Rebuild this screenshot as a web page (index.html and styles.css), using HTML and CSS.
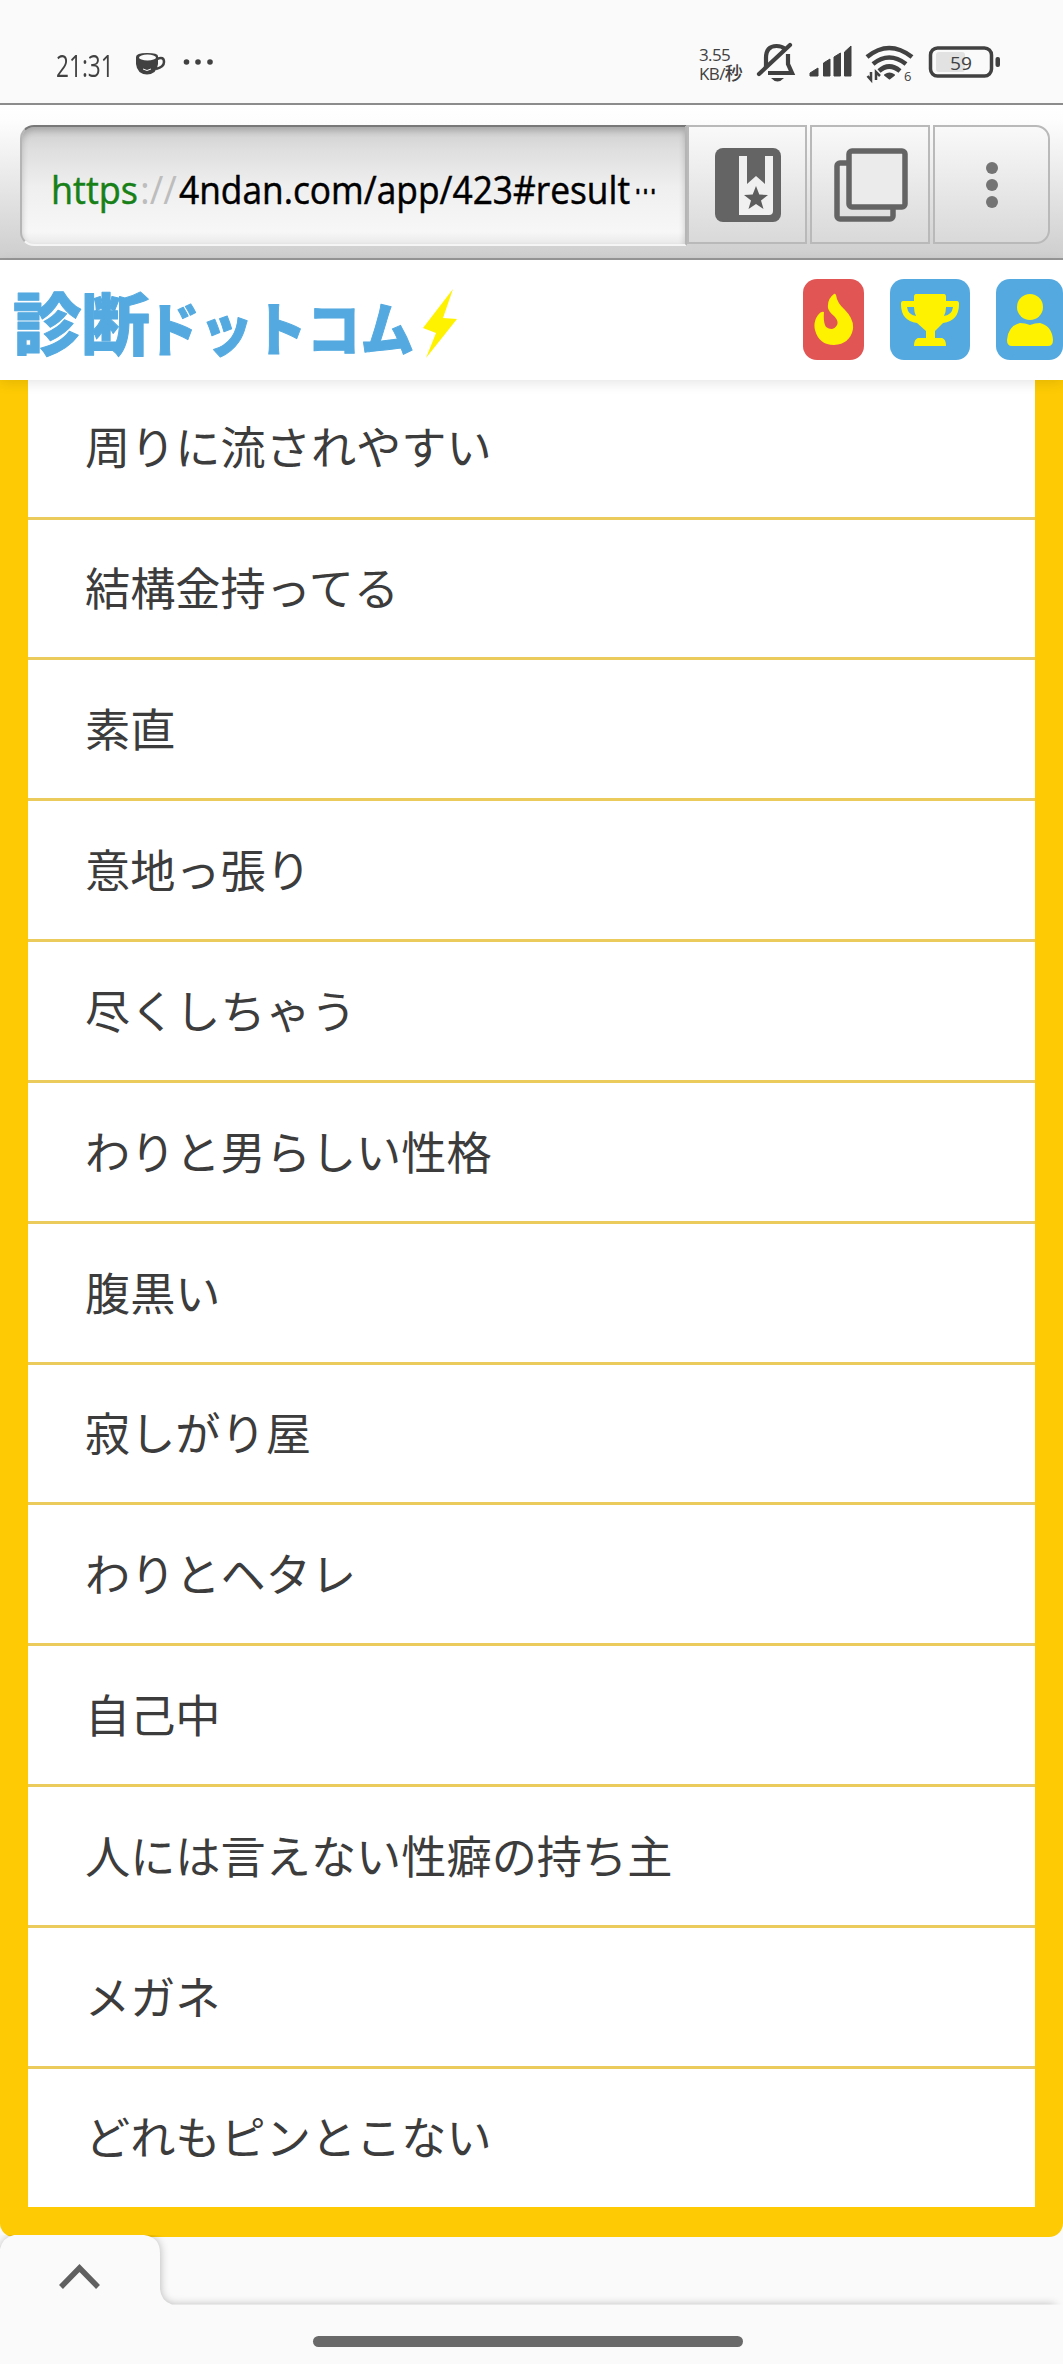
FILE: index.html
```
<!DOCTYPE html>
<html lang="ja">
<head>
<meta charset="utf-8">
<title>診断ドットコム</title>
<link rel="stylesheet" href="styles.css">
</head>
<body>
<div class="screen">
  <div class="status">
    <span class="clock"><span class="stretch">21:31</span></span>
    <svg class="cup" width="30" height="24" viewBox="0 0 30 24">
      <path d="M0 5Q0 1 11 1T22 4V12Q21 22 11 22.500Q1 22 0 12Z" fill="#414141"/>
      <ellipse cx="11.500" cy="5.500" rx="8.500" ry="3" fill="#fafafa"/>
      <path d="M21 7Q28 4 28 10Q28 15 20 17" fill="none" stroke="#414141" stroke-width="2.500"/>
      <path d="M7 17Q11 20 15 17" fill="none" stroke="#fafafa" stroke-width="1"/>
    </svg>
    <svg class="more" width="30" height="8" viewBox="0 0 30 8" fill="#414141"><circle cx="3.500" cy="4" r="2.800"/><circle cx="15" cy="4" r="2.800"/><circle cx="27" cy="4" r="2.800"/></svg>
    <span class="speed">3.55<br>KB/<b>秒</b></span>
    <svg class="signals" width="252" height="44" viewBox="0 0 252 44" fill="none" stroke="#414141">
      <g stroke-width="4.200">
        <path d="M10 25V16Q10 4 20.500 4Q26 4 29 7M32 12V22L36 31H12"/>
        <path d="M3 32L34 3" stroke-linecap="round"/>
      </g>
      <path d="M15 36H28Q21.500 43 15 36Z" fill="#414141" stroke="none"/>
      <path d="M54 34V31L62 26V34ZM67.500 34V21L74 17V34ZM78 34V15L84.500 11V34ZM88.500 34V10L95 4V34Z" fill="#414141" stroke-width="1" stroke-linejoin="round"/>
      <g stroke-width="4.600">
        <path d="M111 15Q133 -3 156 15"/><path d="M117 22Q133 9 150 22"/><path d="M123 29Q133 20 144 29"/>
      </g>
      <path d="M129 33Q133.500 30 138 33L133.500 36.500Z" fill="#414141" stroke-width="2" stroke-linejoin="round"/>
      <path d="M115 30V38L111.500 34M120 38V30L124 34" stroke-width="2.500"/>
      <rect x="174.500" y="6" width="61" height="28" rx="7" stroke-width="3.500"/>
      <rect x="180" y="10" width="29" height="20" rx="3" fill="#e2e2e2" stroke="none"/>
      <rect x="239.500" y="15" width="4.500" height="10" rx="2" fill="#414141" stroke="none"/>
      <text class="net-mark" x="148" y="39">6</text>
      <text class="battery-value" x="194" y="28" textLength="22" lengthAdjust="spacingAndGlyphs">59</text>
    </svg>
  </div>

  <div class="toolbar">
    <div class="address">
      <svg class="url" width="620" height="60" viewBox="0 0 620 60">
        <text y="46" class="scheme" x="-2" textLength="87" lengthAdjust="spacingAndGlyphs">https</text>
        <text y="46" class="slashes" x="87" textLength="37" lengthAdjust="spacingAndGlyphs">://</text>
        <text y="46" class="path" x="126" textLength="451" lengthAdjust="spacingAndGlyphs">4ndan.com/app/423#result</text>
        <text y="46" class="path" x="581" textLength="23" lengthAdjust="spacingAndGlyphs">⋯</text>
      </svg>
    </div>
    <div class="tool">
      <svg width="66" height="74" viewBox="0 0 66 74">
        <rect x="0" y="0" width="66" height="74" rx="8" fill="#646464"/>
        <path d="M24 8H32V36L41 28L50 36V8H58V63Q58 67 54 67H24Z" fill="#f0f0f0"/>
        <path d="M41 38L44.300 46.500L53 47L46 52.500L48.500 61L41 56L33.500 61L36 52.500L29 47L37.700 46.500Z" fill="#5c5c5c"/>
      </svg>
    </div>
    <div class="tool">
      <svg width="74" height="74" viewBox="0 0 74 74" fill="none" stroke="#646464" stroke-width="5.500">
        <rect x="3" y="15" width="56" height="56" rx="3"/>
        <rect x="15" y="3" width="56" height="56" rx="3" fill="#ebebeb"/>
      </svg>
    </div>
    <div class="tool tool-last">
      <svg width="12" height="46" viewBox="0 0 12 46" fill="#747474"><circle cx="6" cy="6" r="6"/><circle cx="6" cy="23" r="6"/><circle cx="6" cy="40" r="6"/></svg>
    </div>
  </div>

  <header class="site">
    <svg class="logo" width="470" height="80" viewBox="0 0 470 80">
      <g class="logo-text">
        <text x="13" y="61" class="big" textLength="137" lengthAdjust="spacingAndGlyphs">診断</text>
        <text x="146" y="62" class="small" textLength="268" lengthAdjust="spacingAndGlyphs">ドットコム</text>
      </g>
      <path d="M453 0L423 39L436 44L426 69L457 30L443 29Z" fill="#fff200"/>
    </svg>
    <nav class="links">
      <a class="link hot"><svg width="40" height="53" viewBox="0 0 40 53"><path d="M20 1Q13 6 14 15Q15 19 20 23Q25 28 23 32Q19 39 12 34Q9 29 10 19Q7 18 4 22Q-1 29 1 37Q5 52 20 52Q36 51 39 36Q40 26 31 17Q23 10 22 2Q21 0 20 1Z"/></svg></a>
      <a class="link cup-link"><svg width="58" height="52" viewBox="0 0 58 52"><path fill-rule="evenodd" d="M15 0H43Q45 0 45 3V7H56Q58 7 58 10Q58 27 42 29L34 37V44H41Q45 45 45 52H13Q13 45 17 44H25V37L16 29Q0 27 0 10Q0 7 2 7H13V3Q13 0 15 0ZM6 13Q7 21 15 22Q13 18 13 13ZM45 13Q45 18 43 22Q51 21 52 13Z"/></svg></a>
      <a class="link user"><svg width="46" height="52" viewBox="0 0 46 52"><circle cx="23" cy="13" r="13"/><path d="M13 29Q18 29 23 31Q28 29 33 29Q45 32 46 46Q46 52 41 52H5Q0 52 0 46Q1 32 13 29Z"/></svg></a>
    </nav>
  </header>

  <main class="page">
    <ul class="choices">
      <li>周りに流されやすい</li>
      <li>結構金持ってる</li>
      <li>素直</li>
      <li>意地っ張り</li>
      <li>尽くしちゃう</li>
      <li>わりと男らしい性格</li>
      <li>腹黒い</li>
      <li>寂しがり屋</li>
      <li>わりとヘタレ</li>
      <li>自己中</li>
      <li>人には言えない性癖の持ち主</li>
      <li>メガネ</li>
      <li>どれもピンとこない</li>
    </ul>
  </main>

  <footer class="bottom">
    <svg class="drawer" width="1063" height="128" viewBox="0 0 1063 128">
      <defs><filter id="soft" x="-5%" y="-20%" width="110%" height="140%"><feGaussianBlur stdDeviation="5"/></filter></defs>
      <path d="M0 18Q2 4 14 1H146Q160 3 160 18V56Q160 66 172 70H1055V128H0Z" fill="#000" opacity=".28" filter="url(#soft)"/>
      <path d="M0 14Q3 2 14 0H144Q160 2 160 18V54Q161 66 172 69.500H1063V128H0Z" fill="#fafafa"/>
      <path d="M61 52L79.500 33L98 52" fill="none" stroke="#606060" stroke-width="5.500"/>
    </svg>
    <div class="home"></div>
  </footer>
</div>
</body>
</html>
```
FILE: styles.css
```
* { box-sizing: border-box; }
body { margin: 0; background: #fafafa; }
.screen {
  width: 1063px; height: 2364px; overflow: hidden;
  display: flex; flex-direction: column;
  font-family: "Noto Sans CJK JP", sans-serif; color: #3c3c3c;
}
.screen svg { display: block; flex: none; }

.status { height: 103px; flex: none; display: flex; align-items: flex-start; padding-left: 56px; color: #414141; }
.clock { width: 57px; margin-top: 47px; height: 36px; font: 31px/36px "Open Sans", sans-serif; }
.stretch { display: block; transform: scaleX(.73); transform-origin: left; }
.cup { margin: 52px 0 0 23px; }
.more { margin: 58px 0 0 17px; }
.speed { width: 58px; margin: 45px 0 0 486px; font: 17px/19px "Open Sans", "Noto Sans CJK JP", sans-serif; letter-spacing: -.6px; white-space: nowrap; }
.speed b { font-weight: 500; font-size: 18px; line-height: 1; }
.signals { margin: 42px 0 0 -1px; }
.signals text { fill: #414141; stroke: none; font-family: "Open Sans", sans-serif; }
.net-mark { font-size: 13px; }
.signals .battery-value { font-size: 19px; }

.toolbar {
  height: 157px; flex: none; display: flex; align-items: flex-start; padding: 20px 13px 0 20px;
  border-top: 2px solid #8c8c8c; border-bottom: 2px solid #979797;
  background: linear-gradient(#fff 0, #fdfdfd 15px, #cecece 100%);
}
.address {
  width: 668px; height: 121px; padding: 31px 0 0 31px; overflow: hidden;
  border: 2px solid #b5b5b5; border-top-color: #777; border-bottom-color: #f5f5f5;
  border-radius: 14px 0 0 14px;
  background: linear-gradient(#cfcfcf 0, #dedede 22px, #efefef 60px, #f7f7f7 105px, #e9e9e9 100%);
  box-shadow: inset 0 4px 6px rgba(0,0,0,.2);
}
.url { overflow: visible; }
.url text { font: 38px "Open Sans", sans-serif; }
.url .scheme { fill: #178017; stroke: #178017; stroke-width: .5px; }
.url .slashes { fill: #bdbdbd; }
.url .path { fill: #000; stroke: #000; stroke-width: .5px; }
.tool {
  width: 120px; height: 119px; margin-right: 3px; display: flex; align-items: center; justify-content: center;
  border: 2px solid #b9b9b9; background: linear-gradient(#f9f9f9, #d9d9d9);
}
.tool svg { position: relative; left: 1px; }
.tool-last { width: 117px; margin-right: 0; border-radius: 0 14px 14px 0; }
.tool-last svg { left: 0; }

.site { height: 120px; flex: none; display: flex; background: #fff; position: relative; box-shadow: 0 3px 12px rgba(0,0,0,.1); }
.logo { margin-top: 29px; overflow: visible; }
.logo-text { fill: #54aae0; stroke: #54aae0; stroke-linejoin: round; font-family: "Noto Sans CJK JP", sans-serif; font-weight: 900; }
.logo .big { font-size: 68px; stroke-width: 1px; }
.logo .small { font-size: 58px; stroke-width: 1px; }
.links { display: flex; margin: 19px 0 0 333px; gap: 26px; }
.link { height: 81px; display: flex; align-items: center; justify-content: center; border-radius: 14px; background: #54aae0; fill: #fff200; }
.hot { width: 61px; background: #e25555; }
.cup-link { width: 80px; }
.user { width: 67px; }

.page { height: 1857px; flex: none; padding: 0 28px; background: #fdca04; border-radius: 0 0 14px 14px; }
.choices { list-style: none; margin: 0; padding: 0; height: 1827px; background: #fff; }
.choices li {
  height: 140.85px; display: flex; align-items: center; padding: 0 0 2px 57px;
  border-bottom: 3px solid #eacb5c; font-size: 45.2px; line-height: 60px;
}
.choices li:first-child { height: 139.5px; padding-bottom: 5px; }
.choices li:last-child { border-bottom: 0; padding-bottom: 6px; }

.bottom { height: 129px; flex: none; margin-top: -2px; display: flex; flex-direction: column; align-items: center; position: relative; }
.home { width: 430px; height: 11px; margin: -27px 7px 0 0; border-radius: 6px; background: #696969; position: relative; }
```
